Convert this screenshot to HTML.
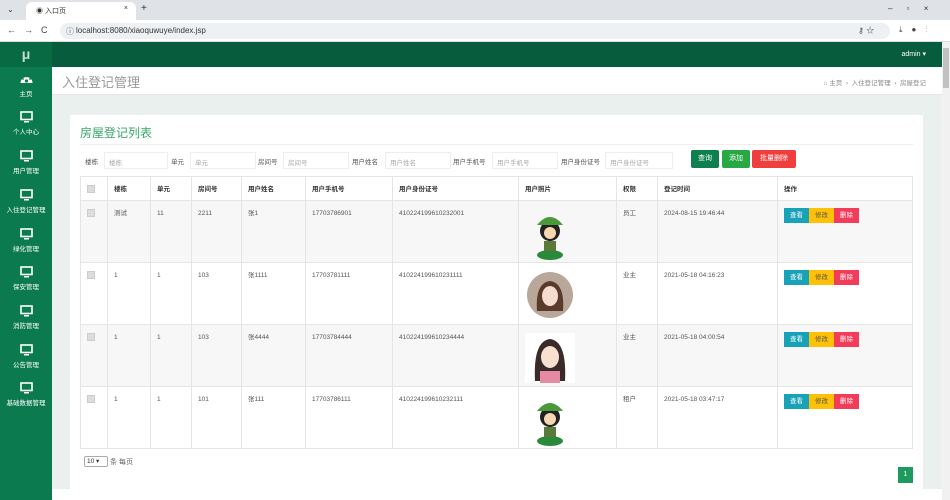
<!DOCTYPE html>
<html><head><meta charset="utf-8"><style>
*{box-sizing:border-box;margin:0;padding:0}
body{width:950px;height:500px;overflow:hidden;font-family:"Liberation Sans","Noto Sans CJK SC",sans-serif;background:#e9f0ee;position:relative;font-size:7px;color:#555}
.abs{position:absolute}
#tabbar{left:0;top:0;width:950px;height:20px;background:#dfe3e8}
#tab{left:26px;top:2px;width:110px;height:18px;background:#fff;border-radius:6px 6px 0 0;font-size:7px;color:#333;padding:4px 0 0 10px}
#addr{left:0;top:20px;width:950px;height:22px;background:#fff;border-bottom:1px solid #ddd}
#url{left:60px;top:23px;width:830px;height:16px;background:#eef1f4;border-radius:8px;font-size:8px;color:#333;padding:3px 0 0 16px}
#side{left:0;top:42px;width:52px;height:458px;background:#0b7a4f}
#logo{left:0;top:42px;width:52px;height:25px;background:#086a43;color:#bfe0d0;font-size:14px;text-align:center;line-height:25px;font-weight:bold}
.si{position:absolute;left:0;width:52px;text-align:center;color:#fff;font-size:6.5px}
.mon{display:block;margin:0 auto 3px;width:13px;height:12px}
#top{left:52px;top:42px;width:890px;height:25px;background:#065c3c;color:#fff;font-size:7px}
#hdr{left:52px;top:67px;width:890px;height:28px;background:#fff;border-bottom:1px solid #e3e8e6}
#scroll{left:942px;top:42px;width:8px;height:458px;background:#f1f1f1}
#card{left:70px;top:115px;width:853px;height:385px;background:#fff}
.in{position:absolute;top:152px;height:17px;border:1px solid #eee;font-size:6.5px;color:#aaa;padding:4px 0 0 4px;background:#fff}
.lb{position:absolute;top:156px;font-size:6.5px;color:#555}
.btn{position:absolute;top:150px;height:18px;color:#fff;font-size:7px;text-align:center;line-height:18px;border-radius:2px}
table{position:absolute;left:80px;top:176px;width:833px;border-collapse:collapse;font-size:6.5px;color:#555}
td,th{border:1px solid #e5e5e5;text-align:left;vertical-align:top;padding:8px 6px 0 6px;font-weight:bold;line-height:9px}
th{height:24px;color:#333}
td{font-weight:normal;height:62px}
td svg{display:block}
tr.g td{background:#f7f7f7}
.cb{display:inline-block;width:8px;height:8px;background:#ddd;border:1px solid #ccc}
.ab{display:inline-block;width:25px;height:15px;color:#fff;text-align:center;line-height:15px;font-size:6.5px;margin-top:-1px}
</style></head><body>
<div id="tabbar" class="abs"></div>
<div class="abs" style="left:7px;top:5px;font-size:8px;color:#333">⌄</div>
<div id="tab" class="abs">◉ 入口页<span style="position:absolute;right:8px;top:3px">×</span></div>
<div class="abs" style="left:141px;top:3px;font-size:10px;color:#333">+</div>
<div class="abs" style="left:888px;top:4px;font-size:8px;color:#333;white-space:nowrap;word-spacing:12px">– ▫ ×</div>
<div id="addr" class="abs"></div>
<div class="abs" style="left:7px;top:25px;font-size:9px;color:#444;letter-spacing:8px;white-space:nowrap">←→C</div>
<div id="url" class="abs">localhost:8080/xiaoquwuye/index.jsp</div>
<div class="abs" style="left:66px;top:26px;font-size:8px;color:#555">ⓘ</div>
<div class="abs" style="left:858px;top:25px;font-size:8px;color:#444;white-space:nowrap">⚷ ☆</div>
<div class="abs" style="left:899px;top:25px;font-size:8px;color:#444;letter-spacing:9px;white-space:nowrap">⤓●⋮</div>
<div id="side" class="abs"></div>
<div id="logo" class="abs">μ</div>
<div class="si" style="top:73px"><svg class="mon" viewBox="0 0 13 12"><path d="M0.5 10A6 6 0 1 1 12.5 10Z" fill="#fff"/><circle cx="6.5" cy="8" r="1.6" fill="#0b7a4f"/><circle cx="3" cy="6" r="0.9" fill="#0b7a4f"/><circle cx="10" cy="6" r="0.9" fill="#0b7a4f"/><circle cx="6.5" cy="3.5" r="0.9" fill="#0b7a4f"/></svg>主页</div>
<div class="si" style="top:111px"><svg class="mon" viewBox="0 0 13 12"><rect x="1" y="1" width="11" height="7.5" fill="none" stroke="#fff" stroke-width="1.6"/><rect x="4" y="10" width="5" height="1.5" fill="#fff"/></svg>个人中心</div>
<div class="si" style="top:150px"><svg class="mon" viewBox="0 0 13 12"><rect x="1" y="1" width="11" height="7.5" fill="none" stroke="#fff" stroke-width="1.6"/><rect x="4" y="10" width="5" height="1.5" fill="#fff"/></svg>用户管理</div>
<div class="si" style="top:189px"><svg class="mon" viewBox="0 0 13 12"><rect x="1" y="1" width="11" height="7.5" fill="none" stroke="#fff" stroke-width="1.6"/><rect x="4" y="10" width="5" height="1.5" fill="#fff"/></svg>入住登记管理</div>
<div class="si" style="top:228px"><svg class="mon" viewBox="0 0 13 12"><rect x="1" y="1" width="11" height="7.5" fill="none" stroke="#fff" stroke-width="1.6"/><rect x="4" y="10" width="5" height="1.5" fill="#fff"/></svg>绿化管理</div>
<div class="si" style="top:266px"><svg class="mon" viewBox="0 0 13 12"><rect x="1" y="1" width="11" height="7.5" fill="none" stroke="#fff" stroke-width="1.6"/><rect x="4" y="10" width="5" height="1.5" fill="#fff"/></svg>保安管理</div>
<div class="si" style="top:305px"><svg class="mon" viewBox="0 0 13 12"><rect x="1" y="1" width="11" height="7.5" fill="none" stroke="#fff" stroke-width="1.6"/><rect x="4" y="10" width="5" height="1.5" fill="#fff"/></svg>消防管理</div>
<div class="si" style="top:344px"><svg class="mon" viewBox="0 0 13 12"><rect x="1" y="1" width="11" height="7.5" fill="none" stroke="#fff" stroke-width="1.6"/><rect x="4" y="10" width="5" height="1.5" fill="#fff"/></svg>公告管理</div>
<div class="si" style="top:382px"><svg class="mon" viewBox="0 0 13 12"><rect x="1" y="1" width="11" height="7.5" fill="none" stroke="#fff" stroke-width="1.6"/><rect x="4" y="10" width="5" height="1.5" fill="#fff"/></svg>基础数据管理</div>
<div id="top" class="abs"><span style="position:absolute;right:16px;top:8px">admin ▾</span></div>
<div id="hdr" class="abs"><span style="position:absolute;left:10px;top:5px;font-size:13px;color:#999">入住登记管理</span><span style="position:absolute;right:16px;top:10px;font-size:6.5px;color:#888">⌂ 主页 &nbsp;›&nbsp; 入住登记管理 &nbsp;›&nbsp; 房屋登记</span></div>
<div id="scroll" class="abs"><div style="margin:6px 1px;width:6px;height:40px;background:#c1c1c1"></div></div>
<div id="card" class="abs"></div>
<div class="abs" style="left:80px;top:124px;font-size:12px;color:#3aa56a">房屋登记列表</div>
<div class="abs" style="left:80px;top:144px;width:833px;height:1px;background:#eee"></div>
<span class="lb" style="left:85px">楼栋</span><div class="in" style="left:104px;width:64px">楼栋</div>
<span class="lb" style="left:171px">单元</span><div class="in" style="left:190px;width:66px">单元</div>
<span class="lb" style="left:258px">房间号</span><div class="in" style="left:283px;width:66px">房间号</div>
<span class="lb" style="left:352px">用户姓名</span><div class="in" style="left:385px;width:66px">用户姓名</div>
<span class="lb" style="left:453px">用户手机号</span><div class="in" style="left:492px;width:66px">用户手机号</div>
<span class="lb" style="left:561px">用户身份证号</span><div class="in" style="left:605px;width:68px">用户身份证号</div>
<div class="btn" style="left:691px;width:28px;background:#0e7f4f">查询</div>
<div class="btn" style="left:722px;width:28px;background:#28a745">添加</div>
<div class="btn" style="left:752px;width:44px;background:#f03d3d">批量删除</div>
<table>
<tr><th style="width:27px"><span class="cb"></span></th><th style="width:43px">楼栋</th><th style="width:41px">单元</th><th style="width:50px">房间号</th><th style="width:64px">用户姓名</th><th style="width:87px">用户手机号</th><th style="width:126px">用户身份证号</th><th style="width:98px">用户照片</th><th style="width:41px">权限</th><th style="width:120px">登记时间</th><th>操作</th></tr>
<tr class="g"><td><span class="cb"></span></td><td>测试</td><td>11</td><td>2211</td><td>张1</td><td>17703786901</td><td>410224199610232001</td><td><svg width="50" height="52" viewBox="0 0 50 52"><ellipse cx="25" cy="46" rx="13" ry="5" fill="#2a8a3a"/><circle cx="25" cy="22" r="10" fill="#222"/><circle cx="25" cy="24" r="6" fill="#f5d8b0"/><path d="M12 16Q25 0 38 16Z" fill="#4a9a3a"/><rect x="19" y="32" width="12" height="10" fill="#5a7a3a"/></svg></td><td>员工</td><td>2024-08-15 19:46:44</td><td><span class="ab" style="background:#17a2b8">查看</span><span class="ab" style="background:#ffc107;color:#555">修改</span><span class="ab" style="background:#f33c5a">删除</span></td></tr>
<tr><td><span class="cb"></span></td><td>1</td><td>1</td><td>103</td><td>张1111</td><td>17703781111</td><td>410224199610231111</td><td><svg width="50" height="50" viewBox="0 0 50 50"><circle cx="25" cy="24" r="23" fill="#b9a79a"/><path d="M12 40Q10 12 25 10Q40 12 38 40Z" fill="#5a3a2a"/><ellipse cx="25" cy="25" rx="8" ry="10" fill="#f3dccd"/></svg></td><td>业主</td><td>2021-05-18 04:16:23</td><td><span class="ab" style="background:#17a2b8">查看</span><span class="ab" style="background:#ffc107;color:#555">修改</span><span class="ab" style="background:#f33c5a">删除</span></td></tr>
<tr class="g"><td><span class="cb"></span></td><td>1</td><td>1</td><td>103</td><td>张4444</td><td>17703784444</td><td>410224199610234444</td><td><svg width="50" height="50" viewBox="0 0 50 50"><rect width="50" height="50" fill="#fff"/><path d="M10 48Q8 8 25 6Q42 8 40 48Z" fill="#3a2a2a"/><ellipse cx="25" cy="24" rx="9" ry="11" fill="#f7e0d0"/><rect x="15" y="38" width="20" height="12" fill="#e58aa0"/></svg></td><td>业主</td><td>2021-05-18 04:00:54</td><td><span class="ab" style="background:#17a2b8">查看</span><span class="ab" style="background:#ffc107;color:#555">修改</span><span class="ab" style="background:#f33c5a">删除</span></td></tr>
<tr><td><span class="cb"></span></td><td>1</td><td>1</td><td>101</td><td>张111</td><td>17703786111</td><td>410224199610232111</td><td><svg width="50" height="52" viewBox="0 0 50 52"><ellipse cx="25" cy="46" rx="13" ry="5" fill="#2a8a3a"/><circle cx="25" cy="22" r="10" fill="#222"/><circle cx="25" cy="24" r="6" fill="#f5d8b0"/><path d="M12 16Q25 0 38 16Z" fill="#4a9a3a"/><rect x="19" y="32" width="12" height="10" fill="#5a7a3a"/></svg></td><td>租户</td><td>2021-05-18 03:47:17</td><td><span class="ab" style="background:#17a2b8">查看</span><span class="ab" style="background:#ffc107;color:#555">修改</span><span class="ab" style="background:#f33c5a">删除</span></td></tr>
</table>
<div class="abs" style="left:84px;top:456px;width:24px;height:11px;border:1px solid #aaa;border-radius:2px;font-size:6.5px;color:#333;padding-left:2px">10 ▾</div>
<div class="abs" style="left:110px;top:457px;font-size:7px;color:#666">条 每页</div>
<div class="abs" style="left:898px;top:467px;width:15px;height:16px;background:#1f9a5f;color:#fff;font-size:7px;text-align:center;line-height:16px">1</div>
<div class="abs" style="left:52px;top:489px;width:890px;height:11px;background:#fff"></div>
</body></html>
